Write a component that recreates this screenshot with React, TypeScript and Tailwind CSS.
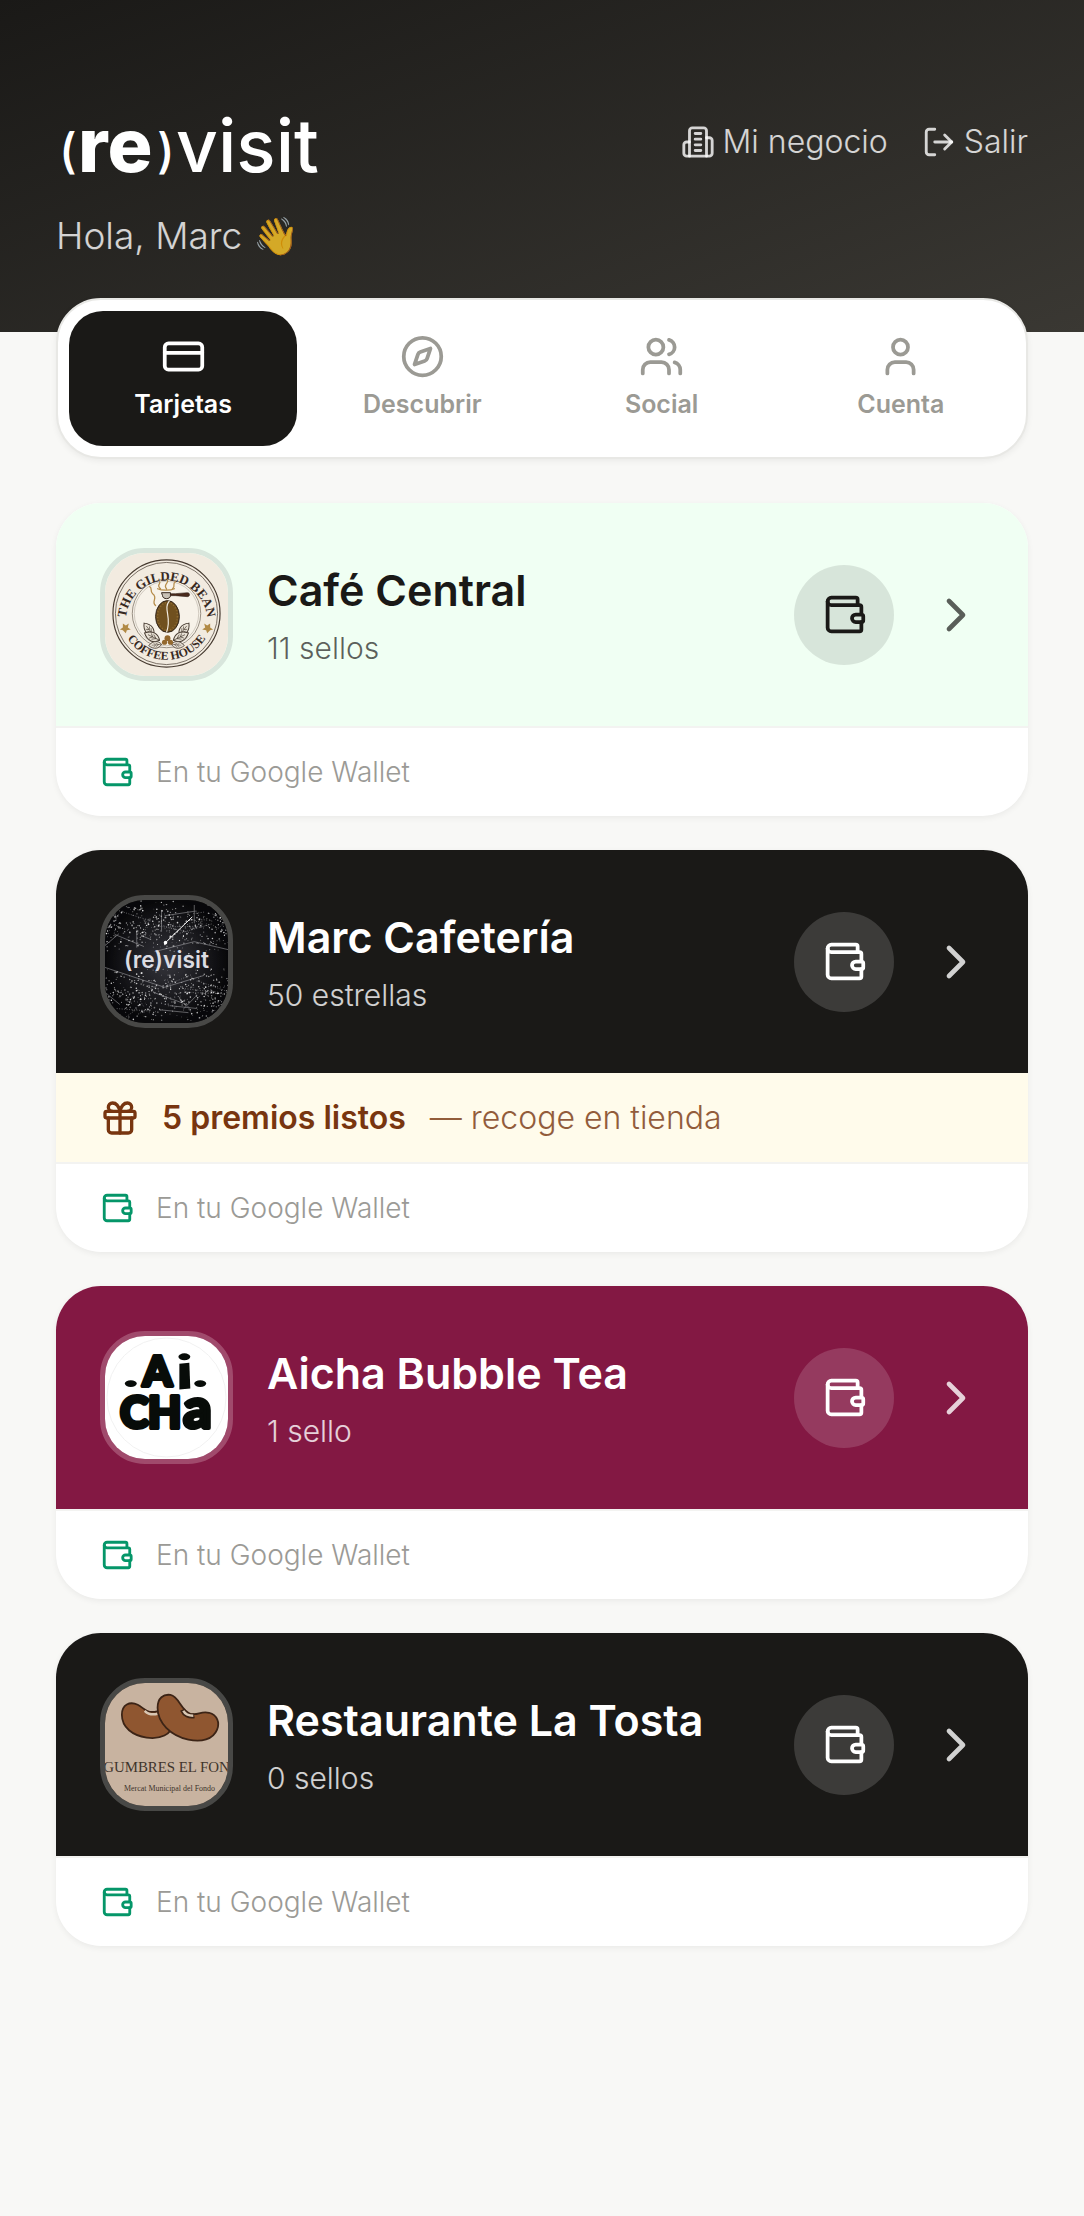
import { useState, type ReactNode } from "react"
import { ChevronRight, Compass, CreditCard, Gift, User, Users, Wallet } from "lucide-react"

type Tone = "mint" | "dark" | "berry"

const tones: Record<Tone, { header: string; subtitle: string; ring: string; bubble: string; chevron: string }> = {
  mint: {
    header: "bg-[#f0fff3] text-[#1a1917]",
    subtitle: "text-[#1a1917]/70",
    ring: "border-[#d8e6dc]",
    bubble: "bg-black/10",
    chevron: "text-[#1a1917]/70",
  },
  dark: {
    header: "bg-[#1a1917] text-white",
    subtitle: "text-white/80",
    ring: "border-[#484846]",
    bubble: "bg-white/15",
    chevron: "text-white/80",
  },
  berry: {
    header: "bg-[#831843] text-white",
    subtitle: "text-white/80",
    ring: "border-[#a04a6c]",
    bubble: "bg-white/15",
    chevron: "text-white/80",
  },
}

const tabs = [
  { label: "Tarjetas", Icon: CreditCard },
  { label: "Descubrir", Icon: Compass },
  { label: "Social", Icon: Users },
  { label: "Cuenta", Icon: User },
]

function BrandMark() {
  return (
    <svg viewBox="0 0 268 96" className="h-24 w-[268px]" fill="#fff" fontFamily="Inter, sans-serif" role="img" aria-label="(re)visit">
      <text x="3" y="74" fontSize="48" fontWeight="500">(</text>
      <text x="22" y="78" fontSize="75" fontWeight="800">re</text>
      <text x="101" y="74" fontSize="48" fontWeight="500">)</text>
      <text x="120" y="78" fontSize="73" fontWeight="500">visit</text>
    </svg>
  )
}

function BuildingIcon() {
  return (
    <svg
      viewBox="0 0 24 24"
      className="size-[34px]"
      fill="none"
      stroke="currentColor"
      strokeWidth={2}
      strokeLinecap="round"
      strokeLinejoin="round"
    >
      <path d="M6 22V4a2 2 0 0 1 2-2h8a2 2 0 0 1 2 2v18Z" />
      <path d="M6 12H4a2 2 0 0 0-2 2v6a2 2 0 0 0 2 2h2" />
      <path d="M18 9h2a2 2 0 0 1 2 2v9a2 2 0 0 1-2 2h-2" />
      <path d="M10 6h4M10 10h4M10 14h4M10 18h4" />
    </svg>
  )
}

function ExitIcon() {
  return (
    <svg
      viewBox="0 0 24 24"
      className="size-[34px]"
      fill="none"
      stroke="currentColor"
      strokeWidth={2}
      strokeLinecap="round"
      strokeLinejoin="round"
    >
      <path d="M9 21H5a2 2 0 0 1-2-2V5a2 2 0 0 1 2-2h4" />
      <path d="m16 17 5-5-5-5" />
      <path d="M21 12H9" />
    </svg>
  )
}

function Leaf({ transform }: { transform: string }) {
  return (
    <g transform={transform} fill="#e9e2d6" stroke="#463a30" strokeWidth="0.8">
      <path d="M0 0C-4 -3 -5 -8 0 -13C5 -8 4 -3 0 0Z" />
      <path d="M0 0V-10M0 -3l-2 -3M0 -3l2 -3M0 -6l-2 -2M0 -6l2 -2" strokeWidth="0.5" />
    </g>
  )
}

function GildedBeanLogo() {
  return (
    <svg viewBox="0 0 124 124" className="size-full">
      <rect width="124" height="124" fill="#f2ebe0" />
      <circle cx="62" cy="61" r="54" fill="none" stroke="#463a30" strokeWidth="1.2" />
      <circle cx="62" cy="61" r="51.5" fill="none" stroke="#463a30" strokeWidth="0.7" />
      <circle cx="62" cy="61" r="34.5" fill="#f7f2e9" stroke="#80776a" strokeWidth="0.8" />
      <circle cx="62" cy="61" r="32.5" fill="none" stroke="#a8a092" strokeWidth="0.5" />
      <defs>
        <path id="bean-top" d="M20.9 69A41 41 0 1 1 103.1 69" />
        <path id="bean-bottom" d="M19.5 80.5A46.8 46.8 0 0 0 104.5 80.5" />
      </defs>
      <g fill="#37291f" fontFamily="'Liberation Serif', serif" fontWeight="700" textAnchor="middle">
        <text fontSize="13">
          <textPath href="#bean-top" startOffset="50%">THE GILDED BEAN</textPath>
        </text>
        <text fontSize="12">
          <textPath href="#bean-bottom" startOffset="50%">COFFEE HOUSE</textPath>
        </text>
      </g>
      <g fill="#b18a45">
        <path d="M18 71l3 2 3-2-1 4 3 2-4 1-1 3-3-3-3-1 3-2zM106 71l-3 2-3-2 1 4-3 2 4 1 1 3 3-3 3-1-3-2z" />
      </g>
      <g fill="none" stroke="#b68d4b" strokeWidth="1.3" strokeLinecap="round">
        <path d="M56 36c-5-4 1-5-1-7M62 36c-4-4 3-6 1-9M68 36c4-3-1-4 3-7M51 53c-5-4 3-8-3-12-3-3 0-6-3-7M53 36c4 2 13 2 17 0" />
      </g>
      <path d="M57 40h9v3c0 2-2 3-4 3s-4-1-4-3z" fill="#c8c1b6" stroke="#35271e" />
      <path d="M66 41h5l12-1c3 0 3 4 0 4l-12-1h-5z" fill="#4a2a1c" stroke="#35271e" strokeWidth="0.6" />
      <Leaf transform="translate(49 83) rotate(-38) scale(1.2)" />
      <Leaf transform="translate(75 83) rotate(38) scale(1.2)" />
      <Leaf transform="translate(55 88) rotate(-64) scale(1.3)" />
      <Leaf transform="translate(69 88) rotate(64) scale(1.3)" />
      <Leaf transform="translate(57 92) rotate(-96)" />
      <Leaf transform="translate(67 92) rotate(96)" />
      <ellipse cx="63" cy="64" rx="12" ry="16" fill="#70501f" stroke="#32241a" />
      <ellipse cx="63" cy="64" rx="10" ry="14" fill="none" stroke="#8f6c33" strokeWidth="1.5" strokeDasharray="1 2" />
      <path d="M65 48c-7 9 3 16-3 32" fill="none" stroke="#f2ebe0" strokeWidth="1.2" />
      <g fill="#94692f">
        <circle cx="63" cy="86" r="3" />
        <circle cx="60" cy="90" r="2.6" />
        <circle cx="66" cy="90" r="2.6" />
      </g>
    </svg>
  )
}

// small deterministic generator so the constellation is the same on every render
function makeRandom(seed: number) {
  let value = seed
  return () => {
    value = (value * 16807) % 2147483647
    return value / 2147483647
  }
}

const random = makeRandom(4217)
const stars = Array.from({ length: 900 }, () => {
  const x = random() * 124
  const band = random() < 0.5 ? 26 : 96
  const y = band + (random() + random() - 1) * 30
  return { x, y, r: 0.35 + random() * 0.5, o: 0.3 + random() * 0.6 }
})
const links = Array.from({ length: 30 }, (_, i) => {
  const top = i % 2 === 0
  const x = random() * 120
  const y = (top ? 6 : 80) + random() * 32
  return { x, y, x2: x + (random() - 0.3) * 50, y2: y + (random() - 0.5) * 30 }
})

function ConstellationLogo() {
  return (
    <svg viewBox="0 0 124 124" className="size-full">
      <defs>
        <radialGradient id="sky">
          <stop offset="0" stopColor="#36363d" />
          <stop offset="1" stopColor="#08080a" />
        </radialGradient>
      </defs>
      <rect width="124" height="124" fill="url(#sky)" />
      <g stroke="#d4d4d8" strokeWidth="0.7" opacity="0.6">
        {links.map((l, i) => (
          <line key={i} x1={l.x} y1={l.y} x2={l.x2} y2={l.y2} strokeDasharray={i % 3 ? "1 1.5" : undefined} />
        ))}
        <path d="M0 46L14 34M57 10v22M90 5v18M32 30v18M0 68L60 88 100 76M50 52L90 42 124 50" fill="none" />
      </g>
      {stars.map((s, i) => (
        <circle key={i} cx={s.x} cy={s.y} r={s.r} fill="#fff" opacity={s.o} />
      ))}
      <path d="M61 43L88 17" stroke="#fff" />
      <circle cx="61" cy="43" r="1.8" fill="#fff" />
      <text x="62" y="69" textAnchor="middle" fontFamily="Inter, sans-serif" fontSize="23" fontWeight="600" fill="#dcdce2">
        (re)visit
      </text>
    </svg>
  )
}

function AichaLogo() {
  return (
    <svg viewBox="0 0 124 124" className="size-full">
      <rect width="124" height="124" fill="#fff" />
      <circle cx="62" cy="62" r="60" fill="none" stroke="#f1f1f1" />
      <g fill="#080c09" stroke="#080c09" strokeWidth="4" strokeLinejoin="round" fontFamily="Lato, sans-serif" fontWeight="900">
        <text x="38" y="50" fontSize="42">A</text>
        <text x="15" y="93" fontSize="44">C</text>
        <text x="43" y="93" fontSize="44">H</text>
        <text x="79" y="93" fontSize="56">a</text>
      </g>
      <g fill="#080c09">
        <path d="M75 28l10-1 1 26-11 1z" />
        <ellipse cx="80" cy="21" rx="6" ry="3.5" />
        <ellipse cx="26" cy="48" rx="6" ry="3.5" />
        <ellipse cx="96" cy="48" rx="6" ry="3.5" />
      </g>
    </svg>
  )
}

function BeansLogo() {
  return (
    <svg viewBox="0 0 124 124" className="size-full">
      <rect width="124" height="124" fill="#c8b3a0" />
      <g fill="#8f5630" stroke="#3c2416" strokeWidth="1.8" strokeLinejoin="round">
        <path d="M17 32C17 22 25 18 33 22C39 25 41 30 50 29C60 27 68 31 68 41C68 52 55 57 42 55C28 53 17 45 17 32Z" />
        <path d="M40 28c4 4 9 4 13 3" fill="none" stroke="#d9c7b3" strokeWidth="2.5" />
        <path d="M53 25C53 15 59 11 66 12C75 14 76 27 86 31C94 33 96 28 105 30C113 32 116 40 113 47C109 57 97 60 84 57C66 53 53 40 53 25Z" />
        <path d="M78 27c2 5 7 7 12 6" fill="none" stroke="#3c2416" strokeWidth="5" />
        <path d="M79 28c2 4 6 5 10 5" fill="none" stroke="#d9c7b3" strokeWidth="2.5" />
      </g>
      <g fill="#40342b" textAnchor="middle" fontFamily="'Liberation Serif', serif">
        <text x="62" y="90" fontSize="15">GUMBRES EL FON</text>
        <text x="65" y="109" fontSize="8">Mercat Municipal del Fondo</text>
      </g>
    </svg>
  )
}

interface LoyaltyCardProps {
  name: string
  balance: string
  tone: Tone
  logo: ReactNode
  rewards?: string
}

function LoyaltyCard({ name, balance, tone, logo, rewards }: LoyaltyCardProps) {
  const t = tones[tone]
  return (
    <article className="overflow-hidden rounded-[45px] bg-white shadow-[0_2px_6px_rgba(0,0,0,0.06)]">
      <div className={`flex items-center gap-[34px] px-[44px] py-[45px] ${t.header}`}>
        <div className={`size-[133px] shrink-0 overflow-hidden rounded-[45px] border-[5px] ${t.ring}`}>{logo}</div>
        <div className="min-w-0 flex-1">
          <h2 className="truncate text-[43px] leading-[54px] font-semibold">{name}</h2>
          <p className={`mt-3 text-[30px] leading-[38px] font-light ${t.subtitle}`}>{balance}</p>
        </div>
        <button
          type="button"
          aria-label={`Wallet de ${name}`}
          className={`flex size-[100px] shrink-0 items-center justify-center rounded-full ${t.bubble}`}
        >
          <Wallet className="size-[45px]" />
        </button>
        <a href="#tarjeta" aria-label={`Abrir ${name}`} className={`shrink-0 ${t.chevron}`}>
          <ChevronRight className="size-14" />
        </a>
      </div>

      {rewards && (
        <div className="flex h-[89px] items-center bg-[#fffbeb] px-[44px] text-[32px] leading-10 text-[#78350f]">
          <Gift className="mr-[22px] size-10" />
          <span className="font-semibold">{rewards}</span>
          <span className="ml-6 font-light opacity-80">— recoge en tienda</span>
        </div>
      )}

      <div className="flex h-[90px] items-center gap-[22px] border-t-2 border-[#f3f3f1] px-[44px] text-[28px] leading-9 font-light text-[#9b9a96]">
        <Wallet className="size-[34px] text-[#059669]" />
        <span>En tu Google Wallet</span>
      </div>
    </article>
  )
}

export default function App() {
  const [active, setActive] = useState("Tarjetas")

  return (
    <div className="min-h-screen bg-[#f8f8f6] font-['Inter',sans-serif] text-[#1a1917]">
      <header className="bg-[linear-gradient(160deg,#1a1917,#3a3833)] px-14 pt-[94px] pb-[72px] text-white/80">
        <div className="flex items-center justify-between">
          <BrandMark />
          <div className="flex items-center gap-[34px] text-[32px] leading-10 font-light">
            <a href="#negocio" className="flex items-center gap-2">
              <BuildingIcon />
              Mi negocio
            </a>
            <button type="button" className="flex items-center gap-2">
              <ExitIcon />
              Salir
            </button>
          </div>
        </div>
        <p className="mt-[22px] text-[37px] leading-[48px] font-light">Hola, Marc 👋</p>
      </header>

      <main className="-mt-[34px] px-14 pb-20">
        <nav className="grid grid-cols-4 gap-[11px] rounded-[45px] border-2 border-[#e8e8e5] bg-white p-[11px] shadow-[0_2px_6px_rgba(0,0,0,0.06)]">
          {tabs.map(({ label, Icon }) => (
            <button
              key={label}
              type="button"
              onClick={() => setActive(label)}
              className={`flex h-[135px] flex-col items-center justify-center gap-1.5 rounded-[34px] text-[25px] leading-[38px] font-semibold ${
                active === label ? "bg-[#1a1917] text-white" : "text-[#9b9a94]"
              }`}
            >
              <Icon className="size-[45px]" />
              {label}
            </button>
          ))}
        </nav>

        <div className="mt-11 flex flex-col gap-[34px]">
          <LoyaltyCard name="Café Central" balance="11 sellos" tone="mint" logo={<GildedBeanLogo />} />
          <LoyaltyCard
            name="Marc Cafetería"
            balance="50 estrellas"
            tone="dark"
            logo={<ConstellationLogo />}
            rewards="5 premios listos"
          />
          <LoyaltyCard name="Aicha Bubble Tea" balance="1 sello" tone="berry" logo={<AichaLogo />} />
          <LoyaltyCard name="Restaurante La Tosta" balance="0 sellos" tone="dark" logo={<BeansLogo />} />
        </div>
      </main>
    </div>
  )
}
